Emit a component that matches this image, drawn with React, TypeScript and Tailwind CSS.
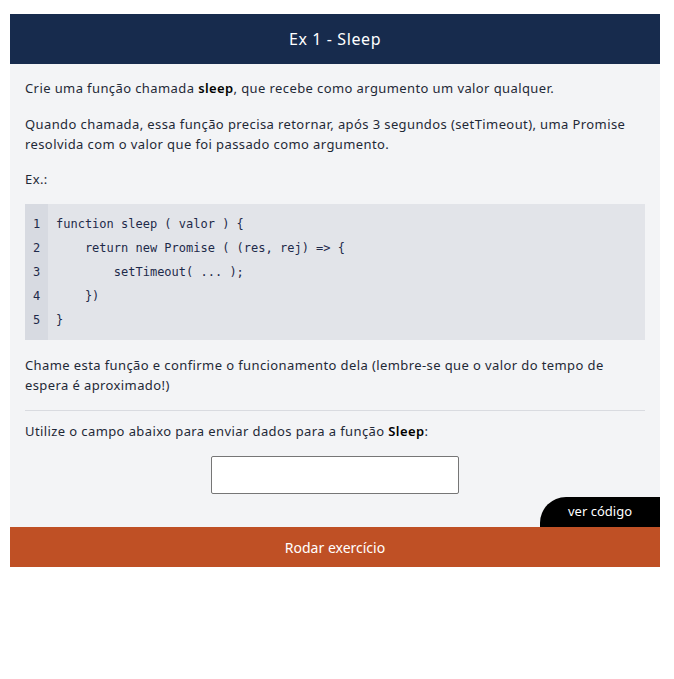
import React from "react";

const code = [
  "function sleep ( valor ) {",
  "    return new Promise ( (res, rej) => {",
  "        setTimeout( ... );",
  "    })",
  "}",
];

function App() {
  return (
    <div className="w-[674px] h-[679px] bg-white pt-[14px] px-[10px] font-['Noto_Sans',sans-serif]">
      <div className="w-[650px] flex flex-col">
        <div className="h-[50px] bg-[#172b4d] flex items-center justify-center">
          <h1 className="text-white text-[16px] tracking-[0.6px]">Ex 1 - Sleep</h1>
        </div>
        <div className="bg-[#f3f4f6] px-[15px] pt-[14px] text-[13px] tracking-[0.4px] text-[#1f2937] flex flex-col">
          <p className="leading-[20px]">
            Crie uma função chamada <b className="font-semibold text-black">sleep</b>, que recebe como argumento um valor qualquer.
          </p>
          <p className="leading-[20px] mt-[16px]">
            Quando chamada, essa função precisa retornar, após 3 segundos (setTimeout), uma Promise resolvida com o valor que foi passado como argumento.
          </p>
          <p className="leading-[20px] mt-[15px]">Ex.:</p>
          <div className="mt-[15px] bg-[#e2e4e9] flex py-[8px] font-['DejaVu_Sans_Mono',monospace] text-[12px] tracking-normal text-[#1e2a4a]">
            <div className="w-[23px] bg-[#d7dae1] -my-[8px] py-[8px] flex flex-col items-center">
              {code.map((_, i) => (
                <span key={i} className="leading-[24px]">{i + 1}</span>
              ))}
            </div>
            <pre className="pl-[8px] font-['DejaVu_Sans_Mono',monospace]">
              {code.map((line, i) => (
                <div key={i} className="leading-[24px]">{line}</div>
              ))}
            </pre>
          </div>
          <p className="leading-[20px] mt-[15px]">
            Chame esta função e confirme o funcionamento dela (lembre-se que o valor do tempo de espera é aproximado!)
          </p>
          <div className="border-t border-[#d9dbe0] mt-[15px]" />
          <p className="leading-[20px] mt-[10px]">
            Utilize o campo abaixo para enviar dados para a função <b className="font-semibold text-black">Sleep</b>:
          </p>
          <div className="flex justify-center mt-[15px]">
            <input className="w-[248px] h-[38px] bg-white border border-[#767676] rounded-[2px]" />
          </div>
          <div className="flex justify-end -mx-[15px] mt-[3px]">
            <button className="w-[120px] h-[30px] bg-black text-white text-[13px] tracking-normal rounded-tl-[26px]">ver código</button>
          </div>
        </div>
        <button className="h-[40px] bg-[#bf5025] text-white text-[14px]">Rodar exercício</button>
      </div>
    </div>
  );
}

export default App;
